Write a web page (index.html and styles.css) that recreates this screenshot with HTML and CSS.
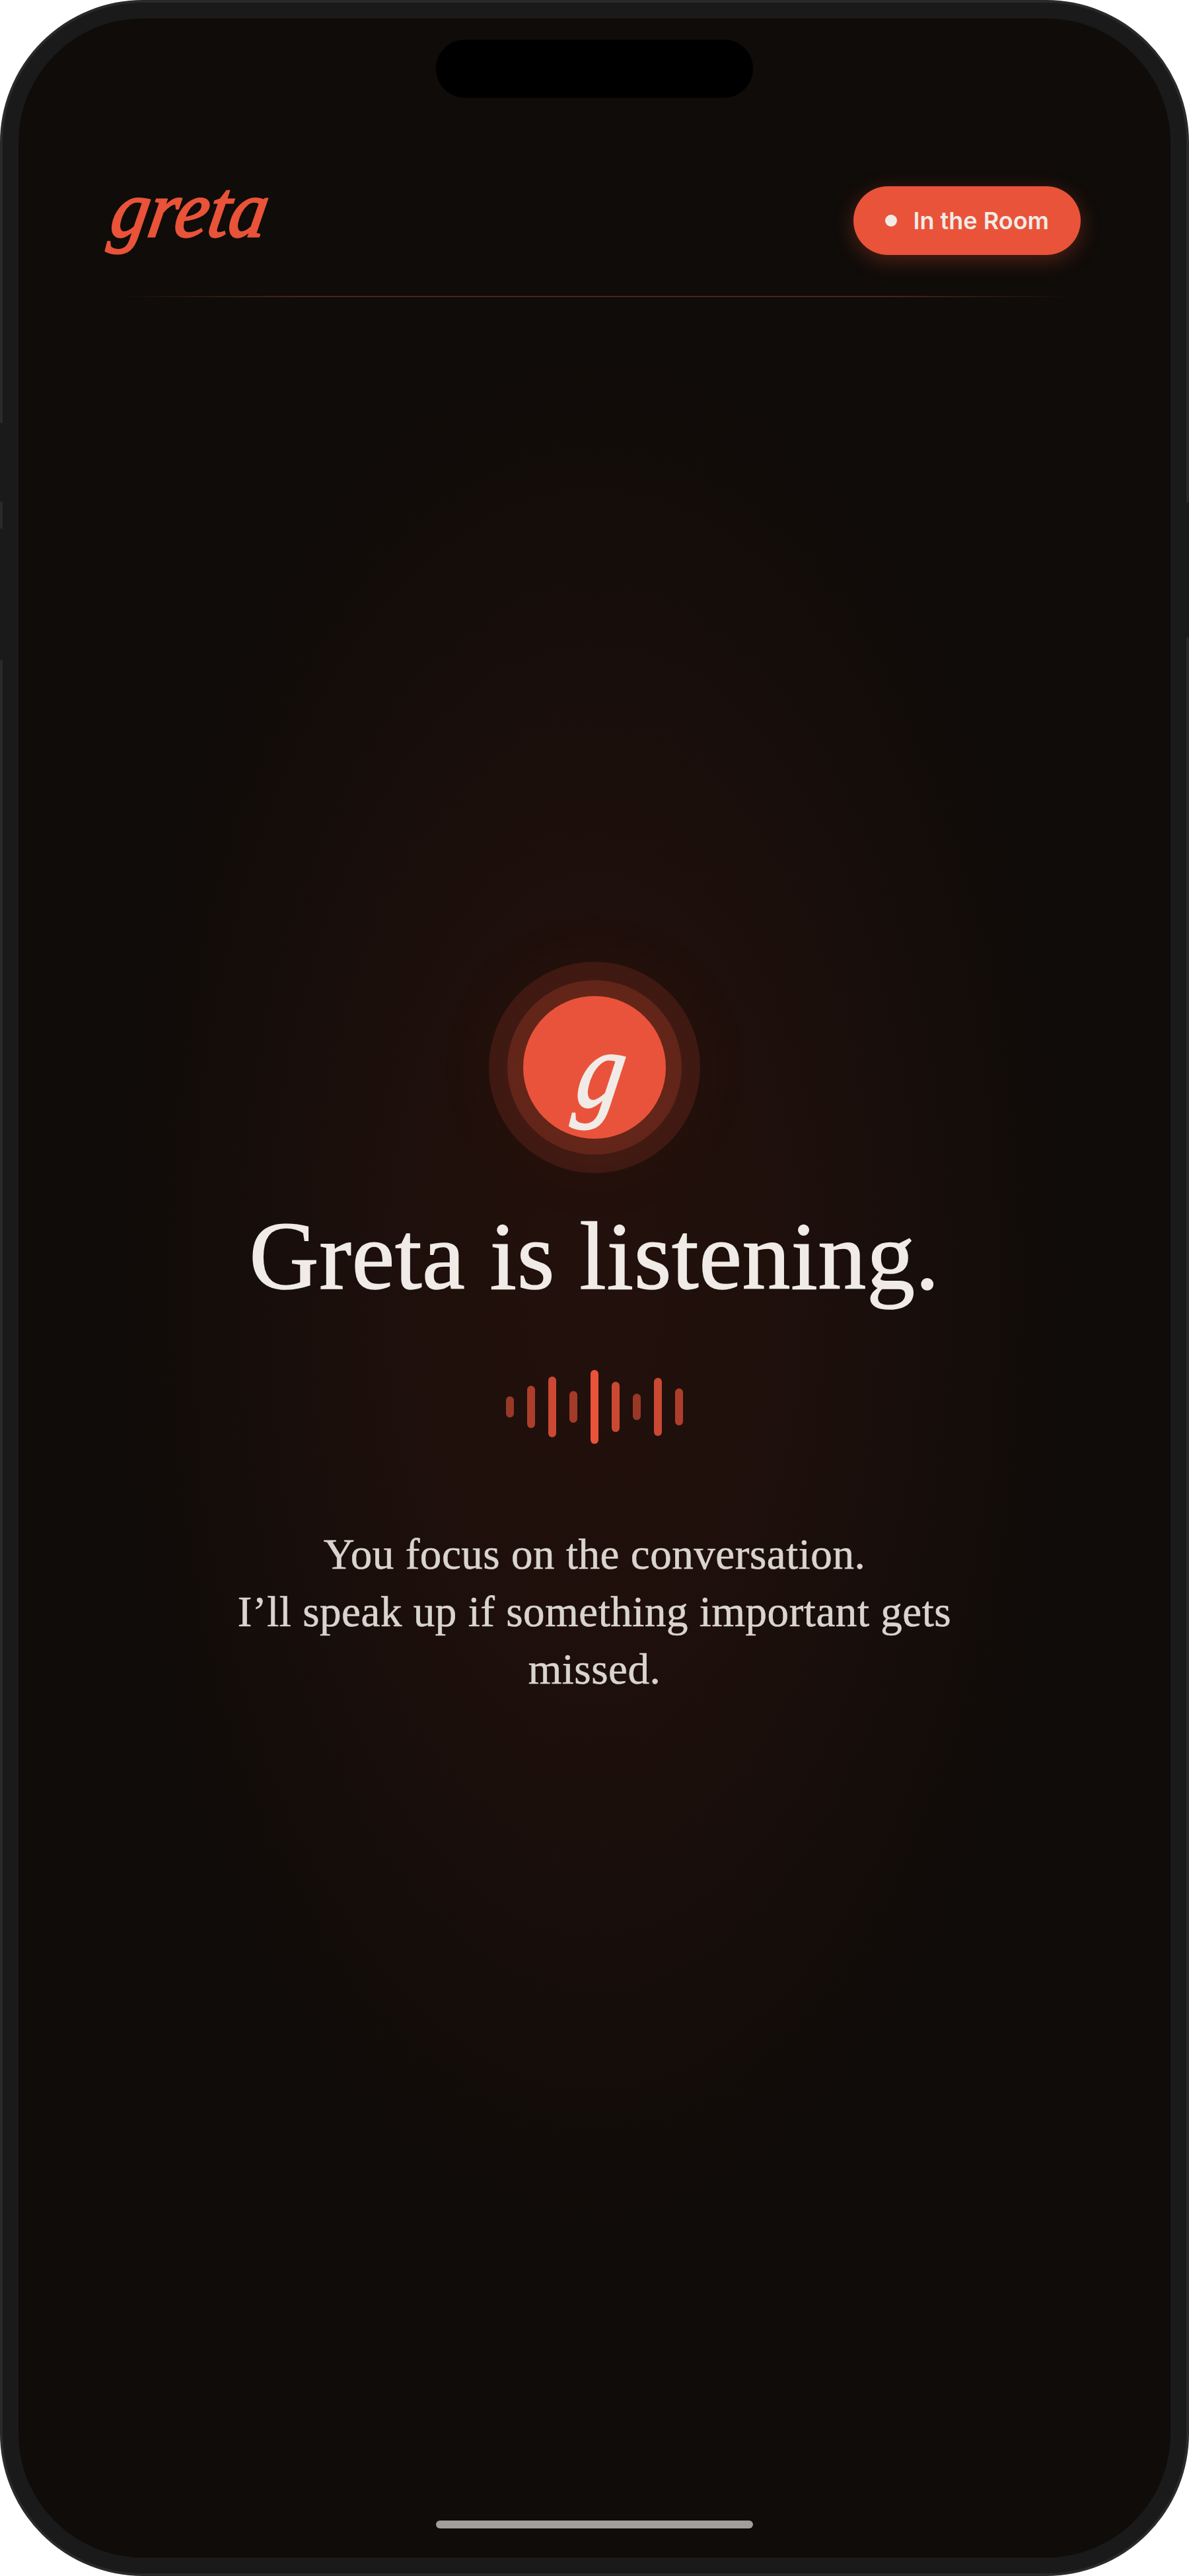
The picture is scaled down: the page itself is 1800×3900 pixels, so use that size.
FILE: index.html
```html
<!DOCTYPE html>
<html lang="en">
<head>
<meta charset="UTF-8">
<meta name="viewport" content="width=device-width, initial-scale=1.0">
<title>Greta</title>
<link rel="stylesheet" href="styles.css">
</head>
<body>
    <div class="phone">
        <span class="side-btn side-btn-up"></span>
        <span class="side-btn side-btn-down"></span>
        <span class="side-btn side-btn-power"></span>
        <div class="screen">
            <div class="notch"></div>
            <header class="top-bar">
                <span class="logo">greta</span>
                <span class="status-pill"><span class="status-dot"></span>In the Room</span>
            </header>
            <div class="divider"></div>
            <main class="listening">
                <div class="avatar"><span class="avatar-letter">g</span></div>
                <h1>Greta is listening.</h1>
                <div class="wave">
                    <span class="bar bar-1"></span>
                    <span class="bar bar-2"></span>
                    <span class="bar bar-3"></span>
                    <span class="bar bar-4"></span>
                    <span class="bar bar-5"></span>
                    <span class="bar bar-6"></span>
                    <span class="bar bar-7"></span>
                    <span class="bar bar-8"></span>
                    <span class="bar bar-9"></span>
                </div>
                <p class="message">You focus on the conversation.<br>I’ll speak up if something important gets missed.</p>
            </main>
            <div class="home-indicator"></div>
        </div>
    </div>
</body>
</html>
```

FILE: styles.css
```css
* {
    margin: 0;
    padding: 0;
    box-sizing: border-box;
}
body {
    background-color: #fff;
    width: 1800px;
    height: 3900px;
    overflow: hidden;
}
.phone {
    position: relative;
    width: 1800px;
    height: 3900px;
    padding: 24px;
    border: 4px solid #2a2a2a;
    border-radius: 216px;
    background-color: #1a1a1a;
}
.side-btn {
    position: absolute;
    width: 6px;
    background-color: #1a1a1a;
}
.side-btn-up {
    left: -4px;
    top: 636px;
    height: 120px;
    border-radius: 0 6px 6px 0;
}
.side-btn-down {
    left: -4px;
    top: 796px;
    height: 200px;
    border-radius: 0 6px 6px 0;
}
.side-btn-power {
    right: -4px;
    top: 756px;
    height: 206px;
    border-radius: 6px 0 0 6px;
}
.screen {
    position: relative;
    display: flex;
    flex-direction: column;
    height: 100%;
    border-radius: 188px;
    overflow: hidden;
    background-color: #0f0c09;
    background-image: radial-gradient(ellipse 760px 1500px at 50% 50%, rgba(233, 60, 45, 0.09) 0%, rgba(233, 60, 45, 0.065) 40%, rgba(233, 60, 45, 0) 100%);
}
.notch {
    position: absolute;
    top: 32px;
    left: 632px;
    width: 480px;
    height: 88px;
    border-radius: 44px;
    background-color: #000;
}
.top-bar {
    display: flex;
    justify-content: space-between;
    align-items: center;
    height: 104px;
    margin-top: 254px;
    padding: 0 136px;
}
.logo {
    display: block;
    transform: translate(-2px, -17px) skewX(-10deg) scaleX(0.93);
    font-family: "Liberation Serif", serif;
    font-style: italic;
    font-size: 122px;
    line-height: 104px;
    -webkit-text-stroke: 3px #e95339;
    color: #e95339;
}
.status-pill {
    display: flex;
    align-items: center;
    gap: 24px;
    height: 104px;
    padding: 0 48px;
    border-radius: 52px;
    background-color: #e95339;
    box-shadow: 0 8px 32px rgba(233, 83, 57, 0.3);
    font-family: Inter, sans-serif;
    font-weight: 600;
    font-size: 36px;
    color: #f0ebe6;
}
.status-dot {
    width: 18px;
    height: 18px;
    border-radius: 50%;
    background-color: #f0ebe6;
}
.divider {
    height: 2px;
    margin: 62px 144px 0;
    background-image: linear-gradient(90deg, rgba(233, 83, 57, 0), rgba(233, 83, 57, 0.3) 20%, rgba(233, 83, 57, 0.3) 80%, rgba(233, 83, 57, 0));
}
.listening {
    display: flex;
    flex-direction: column;
    align-items: center;
    padding-top: 1058px;
}
.avatar {
    display: flex;
    justify-content: center;
    align-items: center;
    width: 216px;
    height: 216px;
    border-radius: 50%;
    background-color: #ea533b;
    box-shadow: 0 0 0 24px rgba(233, 83, 57, 0.2), 0 0 0 52px rgba(233, 83, 57, 0.14), 0 0 120px 40px rgba(233, 83, 57, 0.06);
}
.avatar-letter {
    transform: translate(12px, 4px) skewX(-10deg) scaleX(0.85);
    font-family: "Liberation Serif", serif;
    font-style: italic;
    font-size: 164px;
    line-height: 1;
    -webkit-text-stroke: 3px #f0ebe6;
    color: #f0ebe6;
}
h1 {
    margin-top: 98px;
    font-family: "Liberation Serif", serif;
    font-weight: 400;
    font-size: 146px;
    line-height: 160px;
    letter-spacing: 0.6px;
    -webkit-text-stroke: 1.5px #f0ebe6;
    color: #f0ebe6;
}
.wave {
    display: flex;
    align-items: center;
    gap: 20px;
    height: 112px;
    margin-top: 92px;
}
.bar {
    width: 12px;
    border-radius: 6px;
    background-color: #e95339;
}
.bar-1 { height: 32px; opacity: 0.6; }
.bar-2 { height: 64px; opacity: 0.7; }
.bar-3 { height: 92px; opacity: 0.85; }
.bar-4 { height: 48px; opacity: 0.65; }
.bar-5 { height: 112px; }
.bar-6 { height: 76px; opacity: 0.85; }
.bar-7 { height: 40px; opacity: 0.6; }
.bar-8 { height: 88px; opacity: 0.85; }
.bar-9 { height: 56px; opacity: 0.7; }
.message {
    max-width: 1140px;
    margin-top: 124px;
    font-family: "Liberation Serif", serif;
    font-size: 65px;
    line-height: 87px;
    letter-spacing: 0.55px;
    -webkit-text-stroke: 0.6px #d9d4ce;
    text-align: center;
    color: #d9d4ce;
}
.home-indicator {
    position: absolute;
    bottom: 44px;
    left: 632px;
    width: 480px;
    height: 12px;
    border-radius: 6px;
    background-color: #a09f9c;
}
```
